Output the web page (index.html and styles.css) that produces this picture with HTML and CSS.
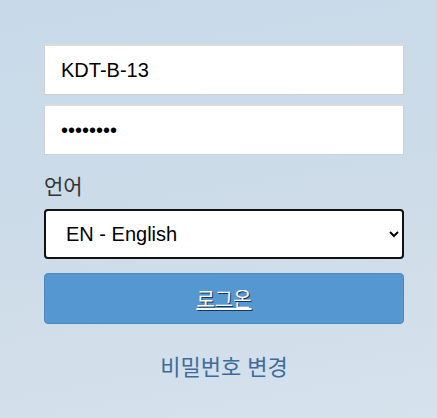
FILE: index.html
```html
<!DOCTYPE html>
<html lang="ko">
<head>
<meta charset="utf-8">
<link rel="stylesheet" href="styles.css">
</head>
<body>
<div class="page">
  <form class="login">
    <input class="field" type="text" value="KDT-B-13">
    <input class="field" type="password" value="12345678">
    <label class="label">언어</label>
    <select class="select">
      <option>EN - English</option>
    </select>
    <button class="btn" type="button"><span>로그온</span></button>
    <a class="link" href="#">비밀번호 변경</a>
  </form>
</div>
</body>
</html>
```
FILE: styles.css
```css
html, body {
  margin: 0;
  padding: 0;
}
body {
  width: 437px;
  height: 418px;
  overflow: hidden;
  font-family: "Liberation Sans", Arial, "Noto Sans CJK KR", sans-serif;
  background: linear-gradient(170deg, #c8daea 0%, #ccdbe8 45%, #d6e2ec 100%);
}
.page {
  height: 418px;
  padding: 44px 0 0 44px;
  box-sizing: border-box;
}
.login {
  width: 360px;
  display: flex;
  flex-direction: column;
}
.field {
  box-sizing: border-box;
  height: 51px;
  margin: 0 0 9px 0;
  padding: 0 16px;
  border: 1px solid #cfcfcf;
  border-top: 2px solid #dcdcdc;
  background: #fff;
  font-family: "Liberation Sans", Arial, sans-serif;
  font-size: 20px;
  color: #000;
  outline: none;
}
.label {
  margin-top: 6px;
  height: 30px;
  font-family: "Noto Sans CJK KR", sans-serif;
  font-size: 21px;
  line-height: 30px;
  color: #333;
}
.select {
  box-sizing: border-box;
  height: 50px;
  margin-top: 9px;
  padding: 0 0 0 16px;
  border: 2px solid #111;
  border-radius: 4px;
  background: #fff;
  font-family: "Liberation Sans", Arial, sans-serif;
  font-size: 20px;
  color: #000;
}
.btn {
  height: 51px;
  margin-top: 14px;
  border: 1px solid #4b88c0;
  border-radius: 4px;
  background: #5597d0;
  color: #fff;
  font-family: "Noto Sans CJK KR", sans-serif;
  font-size: 20px;
  cursor: pointer;
}
.btn span {
  text-decoration: underline;
  text-shadow: 1px 1px 0 #1a3550;
}
.link {
  margin-top: 25px;
  align-self: center;
  height: 32px;
  line-height: 32px;
  font-family: "Noto Sans CJK KR", sans-serif;
  font-size: 22px;
  color: #3d6c9c;
  text-decoration: none;
}
```
